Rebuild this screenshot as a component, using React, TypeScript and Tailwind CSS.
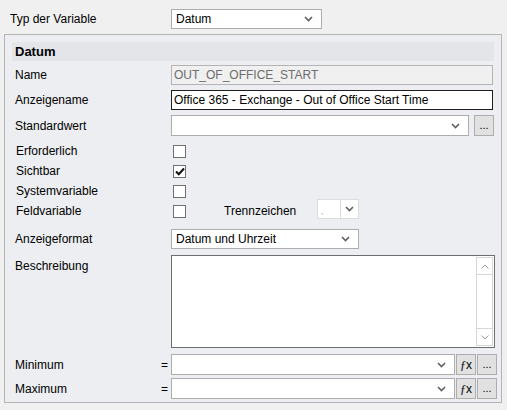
import React from "react"

function Chevron({ className = "" }: { className?: string }) {
  return (
    <svg width="9" height="6" viewBox="0 0 9 6" className={className}>
      <polyline points="1,1 4.5,4.5 8,1" fill="none" stroke="#5f5f5f" strokeWidth="1.6" />
    </svg>
  )
}

function Select({ value = "", width, height = 21 }: { value?: string; width: number; height?: number }) {
  return (
    <div
      className="flex items-center bg-white border border-[#adadad] pl-[4px] pr-[8px] shrink-0"
      style={{ width, height }}
    >
      <span className="flex-1 truncate text-black">{value}</span>
      <Chevron />
    </div>
  )
}

function Checkbox({ checked = false }: { checked?: boolean }) {
  return (
    <div className="w-[13px] h-[13px] border border-[#707070] bg-white flex items-center justify-center shrink-0">
      {checked && (
        <svg width="10" height="9" viewBox="0 0 10 9">
          <polyline points="1,4.5 3.8,7.2 9,1.5" fill="none" stroke="#111" strokeWidth="2.1" />
        </svg>
      )}
    </div>
  )
}

function SmallButton({ children }: { children: React.ReactNode }) {
  return (
    <div className="w-[20px] h-[21px] border border-[#adadad] bg-[#e1e1e1] flex items-center justify-center text-[11px] text-black shrink-0">
      {children}
    </div>
  )
}

function Label({ children, className = "" }: { children: React.ReactNode; className?: string }) {
  return <div className={`w-[156px] shrink-0 text-black ${className}`}>{children}</div>
}

const checks: [string, boolean][] = [
  ["Erforderlich", false],
  ["Sichtbar", true],
  ["Systemvariable", false],
]

export default function App() {
  return (
    <div
      className="w-[507px] h-[410px] bg-[#f0f0f0] text-[12px] leading-none text-black overflow-hidden"
      style={{ fontFamily: '"Liberation Sans", Arial, sans-serif' }}
    >
      {/* Typ der Variable */}
      <div className="flex items-center pt-[8px] h-[29px]">
        <div className="w-[171px] pl-[10px] shrink-0">Typ der Variable</div>
        <Select value="Datum" width={151} height={20} />
      </div>

      {/* Group */}
      <div className="ml-[4px] mt-[5px] w-[498px] border border-[#b4b4b4] bg-[#eceef1] pb-[3px]">
        <div className="mx-[7px] mt-[7px] h-[19px] bg-[#e3e5e9] flex items-center pl-[3px] font-bold text-[13px]">
          Datum
        </div>

        <div className="pl-[10px]">
          <div className="flex items-center mt-[4px] h-[20px]">
            <Label>Name</Label>
            <div className="w-[322px] h-[20px] border border-[#b4b4b4] bg-[#f0f0f0] text-[#6d6d6d] flex items-center pl-[2px]">
              OUT_OF_OFFICE_START
            </div>
          </div>

          <div className="flex items-center mt-[5px] h-[20px]">
            <Label>Anzeigename</Label>
            <div className="w-[322px] h-[20px] border border-[#1e1e1e] bg-white flex items-center pl-[2px]">
              Office 365 - Exchange - Out of Office Start Time
            </div>
          </div>

          <div className="flex items-center mt-[5px] h-[21px]">
            <Label>Standardwert</Label>
            <Select width={298} />
            <div className="ml-[5px]">
              <SmallButton>...</SmallButton>
            </div>
          </div>

          <div className="mt-[5px]">
            {checks.map(([label, checked]) => (
              <div key={label} className="flex items-center h-[20px]">
                <Label className="pl-[1px]">{label}</Label>
                <div className="pl-[2px]">
                  <Checkbox checked={checked} />
                </div>
              </div>
            ))}
            <div className="flex items-center h-[20px]">
              <Label className="pl-[1px]">Feldvariable</Label>
              <div className="pl-[2px]">
                <Checkbox />
              </div>
              <div className="ml-[38px] w-[93px]">Trennzeichen</div>
              <div className="self-start -mt-[2px] flex h-[20px] w-[42px] border border-[#dcdcdc] bg-white">
                <div className="w-[23px] border-r border-[#dcdcdc] relative">
                  <span className="absolute left-[3px] bottom-[2px] text-[8px] text-[#b07090]">,</span>
                </div>
                <div className="flex-1 flex items-center justify-center">
                  <Chevron />
                </div>
              </div>
            </div>
          </div>

          <div className="flex items-center mt-[8px] h-[20px]">
            <Label>Anzeigeformat</Label>
            <Select value="Datum und Uhrzeit" width={188} height={20} />
          </div>

          <div className="flex mt-[6px] h-[93px]">
            <Label className="pt-[5px]">Beschreibung</Label>
            <div className="w-[324px] h-[93px] border border-[#6e6e6e] bg-white flex justify-end p-[1px]">
              <div className="w-[17px] h-full border border-[#d6d6d6] flex flex-col">
                <div className="h-[17px] border-b border-[#d6d6d6] flex items-center justify-center">
                  <svg width="8" height="5" viewBox="0 0 8 5">
                    <polyline points="0.5,4.5 4,1 7.5,4.5" fill="none" stroke="#9a9a9a" strokeWidth="1" />
                  </svg>
                </div>
                <div className="flex-1" />
                <div className="h-[17px] border-t border-[#d6d6d6] flex items-center justify-center">
                  <svg width="8" height="5" viewBox="0 0 8 5">
                    <polyline points="0.5,0.5 4,4 7.5,0.5" fill="none" stroke="#9a9a9a" strokeWidth="1" />
                  </svg>
                </div>
              </div>
            </div>
          </div>

          {["Minimum", "Maximum"].map((l, i) => (
            <div key={l} className={`flex items-center h-[21px] ${i === 0 ? "mt-[6px]" : "mt-[3px]"}`}>
              <div className="w-[146px] shrink-0">{l}</div>
              <div className="w-[10px] shrink-0">=</div>
              <Select width={284} />
              <div className="ml-[1px]">
                <SmallButton>
                  <span className="text-[12px] flex items-baseline">
                    <span className="italic" style={{ fontFamily: '"Liberation Serif", serif' }}>
                      ƒ
                    </span>
                    <span>x</span>
                  </span>
                </SmallButton>
              </div>
              <div className="ml-[1px]">
                <SmallButton>...</SmallButton>
              </div>
            </div>
          ))}
        </div>
      </div>
    </div>
  )
}
